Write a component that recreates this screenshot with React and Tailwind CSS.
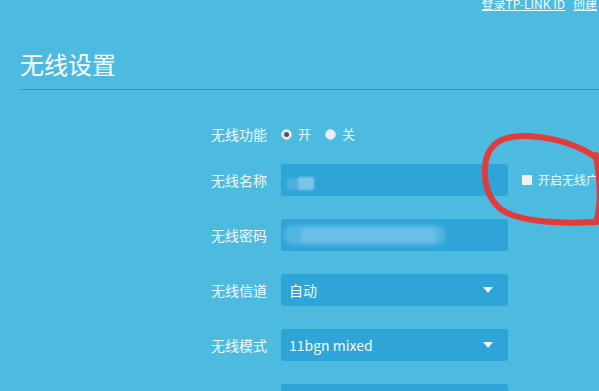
const cjk = { fontFamily: '"Microsoft YaHei", "Noto Sans CJK SC", "Noto Sans", sans-serif' };

function Label({ children }) {
  return (
    <div className="w-[267px] shrink-0 text-right text-[14px] text-[#f1fafd]">{children}</div>
  );
}

function Radio({ checked, label }) {
  return (
    <label className="flex items-center gap-[6px]">
      <span className="flex h-[11px] w-[11px] items-center justify-center rounded-full bg-[#e8eef2] border border-[#c9d6dc]">
        {checked && <span className="h-[5px] w-[5px] rounded-full bg-[#555]" />}
      </span>
      <span className="text-[13px] text-[#f1fafd]">{label}</span>
    </label>
  );
}

function Select({ value }) {
  return (
    <div className="flex h-[32px] w-[227px] items-center justify-between rounded-[3px] bg-[#2ea4d8] pl-[8px] pr-[15px]">
      <span className="text-[14px] text-[#f4fbfe]">{value}</span>
      <svg width="10" height="6" viewBox="0 0 10 6">
        <path d="M0 0 L10 0 L5 6 Z" fill="#eef7fb" />
      </svg>
    </div>
  );
}

export default function App() {
  return (
    <div className="relative h-[391px] w-[599px] overflow-hidden bg-[#4cbbdf]" style={cjk}>
      <div className="flex justify-end gap-[8px] pr-[2px] mt-[-5px] text-[12px] text-[#f4fbfe]">
        <span className="underline">登录TP-LINK ID</span>
        <span className="underline">创建</span>
      </div>

      <div className="pl-[20px] pt-[35px]">
        <h1 className="text-[24px] leading-[32px] text-white">无线设置</h1>
        <div className="mt-[9px] h-[1px] bg-[#2c97c6]" />
      </div>

      <div className="mt-[28px] flex flex-col">
        <div className="flex h-[32px] items-center gap-[14px]">
          <Label>无线功能</Label>
          <div className="flex items-center gap-[14px]">
            <Radio checked label="开" />
            <Radio label="关" />
          </div>
        </div>

        <div className="mt-[14px] flex h-[32px] items-center gap-[14px]">
          <Label>无线名称</Label>
          <div className="relative h-[32px] w-[227px] shrink-0 rounded-[3px] bg-[#2ea4d8]">
            <div className="absolute left-[6px] top-[14px] h-[12px] w-[12px] rounded-[2px] bg-[#4fb1df] blur-[1px]" />
            <div className="absolute left-[17px] top-[13px] h-[13px] w-[16px] rounded-[2px] bg-[#7cc5ea] blur-[1px]" />
          </div>
          <div className="flex items-center gap-[6px] whitespace-nowrap">
            <span className="h-[10px] w-[10px] rounded-[1px] bg-[#eef2f4]" />
            <span className="text-[12px] text-[#f1fafd]">开启无线广播</span>
          </div>
        </div>

        <div className="mt-[23px] flex h-[32px] items-center gap-[14px]">
          <Label>无线密码</Label>
          <div className="relative h-[32px] w-[227px] shrink-0 rounded-[3px] bg-[#2ea4d8]">
            <div className="absolute left-[2px] top-[6px] h-[20px] w-[163px] rounded-full bg-[#52b4e2] blur-[2px]" />
            <div className="absolute left-[20px] top-[9px] h-[15px] w-[135px] rounded-[4px] bg-[#6cbfe7] blur-[2px]" />
          </div>
        </div>

        <div className="mt-[23px] flex h-[32px] items-center gap-[14px]">
          <Label>无线信道</Label>
          <Select value="自动" />
        </div>

        <div className="mt-[23px] flex h-[32px] items-center gap-[14px]">
          <Label>无线模式</Label>
          <Select value="11bgn mixed" />
        </div>

        <div className="mt-[23px] flex h-[32px] items-center gap-[14px]">
          <Label>&nbsp;</Label>
          <div className="h-[32px] w-[227px] rounded-[3px] bg-[#2ea4d8]" />
        </div>
      </div>

      <svg className="pointer-events-none absolute left-0 top-0" width="599" height="391">
        <path
          d="M602 162 C585 148 560 138 528 136 C505 135 490 142 486 160 C482 180 488 200 502 210 C520 222 560 224 596 222 C602 205 600 180 596 155"
          fill="none"
          stroke="#e23b3b"
          strokeWidth="6"
          strokeLinecap="round"
        />
      </svg>
    </div>
  );
}
